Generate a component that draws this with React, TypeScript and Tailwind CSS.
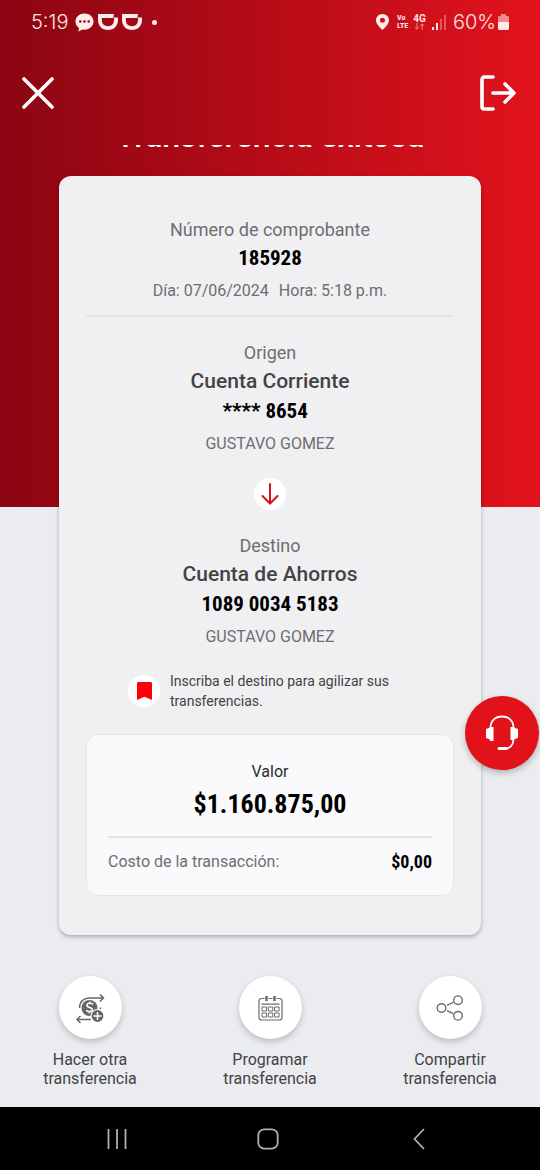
import type { ReactNode } from 'react';

const CONDENSED = "font-['Roboto_Condensed','Liberation_Sans_Narrow',Roboto,sans-serif] font-bold text-black";

const DidiIcon = () => (
  <svg width="20" height="16" viewBox="0 0 20 16" fill="#ffecec" aria-hidden="true">
    <path d="M0 0h16l-.8 3.400H20V6c0 6-4 10-10 10S0 12 0 6zM3.800 4v2c0 3.800 2.400 6.200 6.200 6.200S16 9.800 16 6V4z" fillRule="evenodd" />
  </svg>
);

const StatusBar = () => (
  <div className="flex h-11 items-center justify-between px-[31px] text-[#ffe4e4]">
    <div className="flex items-center">
      <span className="font-[Inter,sans-serif] text-[20px] font-light leading-6">5:19</span>
      <svg className="ml-[7px]" width="19" height="19" viewBox="0 0 19 19" aria-hidden="true">
        <path
          d="M9.5.5c-5 0-9 3.500-9 8 0 2.700 1.400 5 3.600 6.500l-.8 3.500 4.200-2c.7.1 1.300.2 2 .2 5 0 9-3.700 9-8.200s-4-8-9-8z"
          fill="#ffecec"
        />
        <circle cx="5.3" cy="8.5" r="1.3" fill="#920814" />
        <circle cx="9.5" cy="8.5" r="1.3" fill="#920814" />
        <circle cx="13.7" cy="8.5" r="1.3" fill="#920814" />
      </svg>
      <span className="ml-1 flex gap-1">
        <DidiIcon />
        <DidiIcon />
      </span>
      <span className="ml-[10px] size-[5px] rounded-full bg-[#ffecec]" />
    </div>
    <div className="flex items-center">
      <svg width="13" height="16" viewBox="0 0 13 16" aria-hidden="true">
        <path
          fillRule="evenodd"
          d="M6.5 0C2.9 0 0 2.800 0 6.300 0 10.800 6.500 16 6.500 16S13 10.800 13 6.300C13 2.800 10.100 0 6.500 0zm0 3.800a2.500 2.500 0 1 1 0 5 2.500 2.500 0 0 1 0-5z"
          fill="#ffecec"
        />
      </svg>
      <span className="ml-2 flex flex-col font-['Roboto_Condensed',Roboto,sans-serif] text-[8px] font-bold leading-[8px]">
        <span>Vo</span>
        <span>LTE</span>
      </span>
      <span className="ml-[5px] flex flex-col items-center">
        <span className="text-[10px] font-bold leading-[9px]">4G</span>
        <svg width="11" height="7" viewBox="0 0 11 7" fill="none" stroke="#f08a8c" aria-hidden="true">
          <path d="M3 0v6M.8 4 3 6.200 5.200 4M8.200 7V1M6 3 8.200.8 10.400 3" />
        </svg>
      </span>
      <svg className="ml-[6px]" width="15" height="15" viewBox="0 0 15 15" aria-hidden="true">
        <path d="M0 12h2v3H0zM4 8h2v7H4z" fill="#ffecec" />
        <path d="M8 4h2v11H8zM12 0h2v15h-2z" fill="#e8565a" />
      </svg>
      <span className="ml-[6px] font-[Inter,sans-serif] text-[20px] font-light leading-6">60%</span>
      <svg className="ml-[2px]" width="11" height="16" viewBox="0 0 11 16" aria-hidden="true">
        <path d="M3 0h5v2h1.500c.8 0 1.500.7 1.500 1.500V8H0V3.500C0 2.700.7 2 1.500 2H3z" fill="#f08a8c" />
        <path d="M0 8h11v6.500c0 .8-.7 1.500-1.500 1.500h-8C.7 16 0 15.300 0 14.500z" fill="#ffecec" />
      </svg>
    </div>
  </div>
);

type AccountProps = {
  label: string;
  type: string;
  number: string;
  owner: string;
};

const Account = ({ label, type, number, owner }: AccountProps) => (
  <section className="mt-[21px] text-center leading-[29px]">
    <p className="text-[18px] text-[#6d6e71]">{label}</p>
    <h2 className="text-[21px] font-medium leading-[29px] text-[#424344]">{type}</h2>
    <p className={`mt-px text-[21px] ${CONDENSED}`}>{number}</p>
    <p className="mt-[3px] text-[16px] text-[#6d6e71]">{owner}</p>
  </section>
);

const ActionButton = ({ label, children }: { label: string; children: ReactNode }) => (
  <button type="button" className="flex flex-col items-center">
    <span className="flex size-[63px] items-center justify-center rounded-full bg-white shadow-[0_3px_6px_rgba(0,0,0,0.2)]">
      {children}
    </span>
    <span className="mt-[11px] w-[100px] text-[16px] leading-[19px] text-[#424344]">{label}</span>
  </button>
);

const RepeatTransferIcon = () => (
  <svg width="30" height="30" viewBox="0 0 30 30" fill="none" stroke="#666" strokeWidth="1.5" aria-hidden="true">
    <path d="M4.500 15C4.500 8.500 9 5 14.500 5H28.500M25 1.500 28.500 5 25 8.500" />
    <path d="M16 26.500H2M5.500 23 2 26.500 5.500 30M25.500 14.500V16" />
    <circle cx="14.5" cy="15" r="8" fill="#666" stroke="none" />
    <path
      d="M18 11.500c-1-1.500-5.800-1.800-6 .8-.2 2.700 5.500 1.700 5.300 4.400-.2 2.400-4.800 2.200-6 .6M14.700 8.500v2M14.400 18.500v2"
      stroke="#fff"
    />
    <circle cx="22.5" cy="23" r="6.5" fill="#666" stroke="#fff" strokeWidth="1.2" />
    <path d="M22.500 19v8M18.500 23h8" stroke="#fff" />
  </svg>
);

const CalendarIcon = () => (
  <svg width="25" height="26" viewBox="0 0 25 26" fill="none" stroke="#6b6b6b" aria-hidden="true">
    <path
      d="M6.500 3.500h-3C2 3.500 1 4.500 1 6v16.500C1 24 2 25 3.500 25h18c1.500 0 2.500-1 2.500-2.500V6c0-1.500-1-2.500-2.500-2.500h-3M10.500 3.500h4M3.500 9.200h18"
      strokeWidth="1.2"
    />
    <path d="M8.500 1v5M16.500 1v5" strokeWidth="2.5" />
    <path d="M4 12h4.500v4H4zM10.300 12h4.500v4h-4.500zM16.600 12h4.500v4h-4.500zM4 18h4.500v4H4zM10.300 18h4.500v4h-4.500zM16.600 18h4.500v4h-4.500z" />
  </svg>
);

const ShareIcon = () => (
  <svg width="28" height="26" viewBox="0 0 28 26" fill="none" stroke="#6b6b6b" strokeWidth="1.4" aria-hidden="true">
    <circle cx="5.5" cy="13" r="4.3" />
    <circle cx="22" cy="5.2" r="4.3" />
    <circle cx="22" cy="20.8" r="4.3" />
    <path d="m11 10.400 6.300-3M11 15.600l6.300 3" />
  </svg>
);

const NavBar = () => (
  <nav className="mt-auto grid h-[63px] grid-cols-3 items-center justify-items-center bg-black pl-[41px] pr-[46px]">
    <button type="button" aria-label="Recientes">
      <svg width="20" height="22" viewBox="0 0 20 22" stroke="#b0b0b0" strokeWidth="1.8">
        <path d="M1.500 1v20M10 1v20M18.500 1v20" />
      </svg>
    </button>
    <button type="button" aria-label="Inicio">
      <svg width="22" height="22" viewBox="0 0 22 22" fill="none" stroke="#b0b0b0" strokeWidth="1.8">
        <rect x="1.3" y="1.3" width="19.4" height="19.4" rx="6" />
      </svg>
    </button>
    <button type="button" aria-label="Atrás">
      <svg width="12" height="22" viewBox="0 0 12 22" fill="none" stroke="#b0b0b0" strokeWidth="1.8">
        <path d="M11 1 1.500 11 11 21" />
      </svg>
    </button>
  </nav>
);

const App = () => {
  return (
    <div className="relative flex min-h-screen flex-col bg-[#ebecf0] bg-[linear-gradient(90deg,#8b0512,#e2131c)] bg-[length:100%_507px] bg-no-repeat font-[Roboto,sans-serif]">
      <StatusBar />

      <header className="flex h-[97px] items-center justify-between pl-[22px] pr-6">
        <button type="button" aria-label="Cerrar">
          <svg width="32" height="32" viewBox="0 0 32 32" stroke="#fff" strokeWidth="3.6" strokeLinecap="round">
            <path d="m2 2 28 28M30 2 2 30" />
          </svg>
        </button>
        <button type="button" aria-label="Salir">
          <svg
            width="36"
            height="36"
            viewBox="0 0 36 36"
            fill="none"
            stroke="#fff"
            strokeWidth="3.6"
            strokeLinecap="round"
            strokeLinejoin="round"
          >
            <path d="M13 2H4.500C3 2 2 3 2 4.500v27C2 33 3 34 4.500 34H13" />
            <path d="M13 18h21M25 9l9 9-9 9" />
          </svg>
        </button>
      </header>

      <main className="px-[59px]">
        {/* title is almost completely scrolled under the header */}
        <div className="mt-1 flex h-[2px] items-end justify-center overflow-hidden">
          <h1 className="h-[28px] shrink-0 whitespace-nowrap text-[32px] font-medium leading-[34px] text-white">
            Transferencia exitosa
          </h1>
        </div>

        <article className="mt-[29px] rounded-xl bg-[#f0f0f2] px-[27px] pb-[39px] pt-[39px] shadow-[0_2px_4px_rgba(0,0,0,0.28)]">
          <section className="border-b-2 border-[#e4e4e6] pb-[10px] text-center leading-[29px]">
            <p className="text-[18px] text-[#6d6e71]">Número de comprobante</p>
            <p className={`text-[21px] ${CONDENSED}`}>185928</p>
            <p className="mt-[3px] flex justify-center gap-[10px] text-[16px] text-[#6d6e71]">
              <span>Día: 07/06/2024</span>
              <span>Hora: 5:18 p.m.</span>
            </p>
          </section>

          <Account label="Origen" type="Cuenta Corriente" number={'**** 8654\u00a0\u00a0'} owner="GUSTAVO GOMEZ" />

          <div className="mx-auto mt-5 flex size-8 items-center justify-center rounded-full bg-white">
            <svg
              width="18"
              height="22"
              viewBox="0 0 18 22"
              fill="none"
              stroke="#d0111b"
              strokeWidth="2"
              strokeLinecap="round"
              aria-hidden="true"
            >
              <path d="M9 1v19.500M1.500 13 9 20.500l7.500-7.500" />
            </svg>
          </div>

          <Account label="Destino" type="Cuenta de Ahorros" number="1089 0034 5183" owner="GUSTAVO GOMEZ" />

          <button type="button" className="ml-[42px] mt-5 flex items-center gap-[10px] text-left">
            <span className="flex size-8 shrink-0 items-center justify-center rounded-full bg-white">
              <svg width="15" height="18" viewBox="0 0 15 18" aria-hidden="true">
                <path d="M1.500 0h12c.8 0 1.500.7 1.500 1.500V18l-7.500-3.200L0 18V1.500C0 .7.7 0 1.500 0z" fill="#fd0008" />
              </svg>
            </span>
            <span className="w-[240px] text-[14px] leading-5 text-[#424344]">
              Inscriba el destino para agilizar sus transferencias.
            </span>
          </button>

          <section className="mt-[23px] rounded-xl border border-[#e6e6e8] bg-[#fafafc] px-[21px] pb-[21px] pt-[25px]">
            <p className="text-center text-[16px] leading-6 text-[#2b2b2b]">Valor</p>
            <p className={`mt-1 text-center text-[26px] leading-8 ${CONDENSED}`}>$1.160.875,00</p>
            <div className="mt-4 flex items-center justify-between border-t-2 border-[#e4e4e6] pt-3 leading-6">
              <span className="text-[16px] text-[#6d6e71]">Costo de la transacción:</span>
              <span className={`text-[18px] ${CONDENSED}`}>$0,00</span>
            </div>
          </section>
        </article>
      </main>

      <div className="mt-[41px] grid grid-cols-3 pb-[17px]">
        <ActionButton label="Hacer otra transferencia">
          <RepeatTransferIcon />
        </ActionButton>
        <ActionButton label="Programar transferencia">
          <CalendarIcon />
        </ActionButton>
        <ActionButton label="Compartir transferencia">
          <ShareIcon />
        </ActionButton>
      </div>

      <button
        type="button"
        aria-label="Ayuda"
        className="absolute right-px top-[696px] flex size-[74px] items-center justify-center rounded-full bg-[#e2121b] shadow-[0_3px_6px_rgba(0,0,0,0.25)]"
      >
        <svg width="32" height="36" viewBox="0 0 32 36" fill="none" aria-hidden="true">
          <path
            d="M4.500 13C4.500 6 9 1.500 16 1.500S27.500 6 27.500 13M27.500 24c0 6-3.500 9.500-8 9.500"
            stroke="#fff"
            strokeWidth="1.8"
          />
          <path d="M7.500 12H4l-1 1-3 1v9l3 1 1.500 2h3zM24.500 12H28l1 1 3 1v9l-3 1-1.500 1h-3z" fill="#fff" />
          <path d="M13 32h8v3h-8a1.500 1.500 0 0 1 0-3z" fill="#fff" />
        </svg>
      </button>

      <NavBar />
    </div>
  );
};

export default App;
